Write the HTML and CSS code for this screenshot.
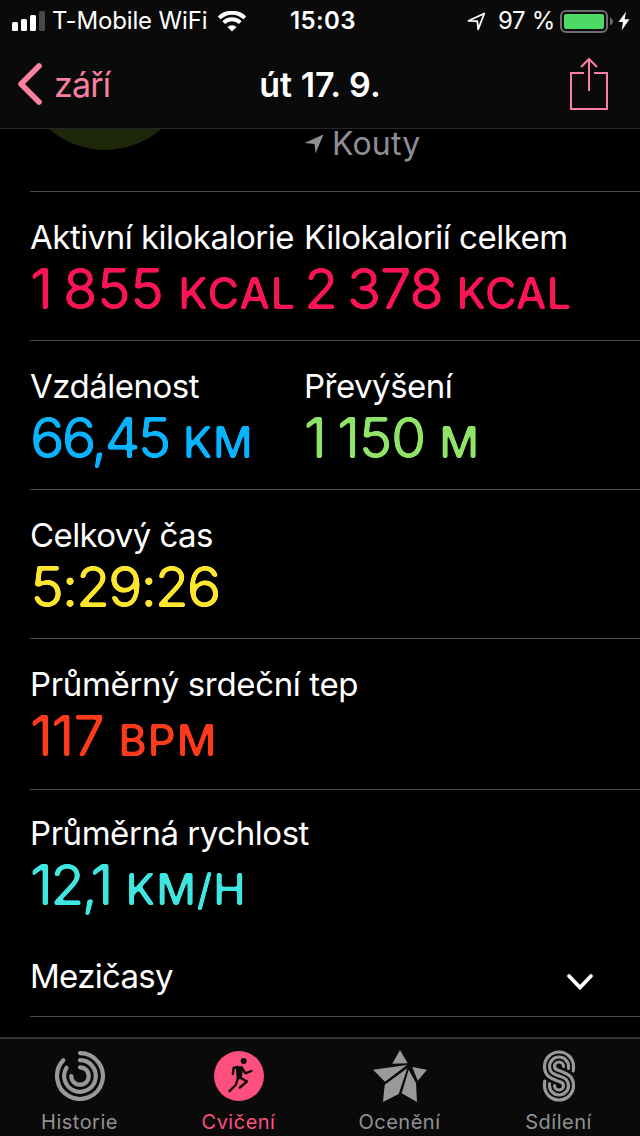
FILE: index.html
```
<!DOCTYPE html>
<html lang="cs">
<head>
    <meta charset="utf-8">
    <title>út 17. 9.</title>
    <link rel="stylesheet" href="styles.css">
</head>
<body>
    <svg class="defs" width="0" height="0">
        <filter id="rounded" x="-5%" y="-5%" width="110%" height="110%" color-interpolation-filters="sRGB">
            <feGaussianBlur stdDeviation="1.3"/>
            <feComponentTransfer>
                <feFuncA type="linear" slope="4" intercept="-1.4"/>
            </feComponentTransfer>
        </filter>
    </svg>

    <header class="top">
        <div class="status">
            <div class="status-left">
                <svg width="34" height="22" viewBox="0 0 34 22" fill="#fff">
                    <rect x="0" y="12" width="6" height="9" rx="1.5"/>
                    <rect x="9" y="9" width="6" height="12" rx="1.5"/>
                    <rect x="18" y="5" width="6" height="16" rx="1.5"/>
                    <rect x="27" y="1" width="6" height="20" rx="1.5" fill="#48484a"/>
                </svg>
                <span class="carrier">T-Mobile WiFi</span>
                <svg width="28" height="21" viewBox="0 0 28 21" fill="none" stroke="#fff" stroke-width="4">
                    <path d="M1.2 6.9 A18.2 18.2 0 0 1 26.8 6.9"/>
                    <path d="M5.7 11.7 A11.8 11.8 0 0 1 22.3 11.7"/>
                    <path d="M9.4 16 A6.6 6.6 0 0 1 18.6 16 L14 20.6 Z" fill="#fff" stroke="none"/>
                </svg>
            </div>
            <span class="time">15:03</span>
            <div class="status-right">
                <svg width="19" height="19" viewBox="0 0 19 19" fill="none" stroke="#fff" stroke-width="1.8" stroke-linejoin="round">
                    <path d="M1.5 8.8 L17.3 1.5 L11.2 17.3 L10.3 9.1 Z"/>
                </svg>
                <span class="percent">97 %</span>
                <svg width="53" height="23" viewBox="0 0 53 23">
                    <rect x="1" y="1" width="46" height="21" rx="5" fill="none" stroke="#6d6d70" stroke-width="2"/>
                    <rect x="4" y="4" width="40" height="15" rx="2" fill="#4cd964"/>
                    <path d="M50 7.5 Q53 9 53 11.5 Q53 14 50 15.5 Z" fill="#6d6d70"/>
                </svg>
                <svg width="12" height="20" viewBox="0 0 12 20" fill="#fff">
                    <path d="M8 0.5 L0.5 11 H5 L3.6 19.5 L11.5 8.3 H6.6 Z"/>
                </svg>
            </div>
        </div>
        <nav class="nav">
            <a class="back">
                <svg width="26" height="44" viewBox="0 0 26 44" fill="none" stroke="#fb7fa1" stroke-width="5.6" stroke-linecap="round" stroke-linejoin="round">
                    <path d="M22 4 L4 22 L22 40"/>
                </svg>
                <span>září</span>
            </a>
            <h1>út 17. 9.</h1>
            <svg class="share" width="40" height="54" viewBox="0 0 40 54" fill="none" stroke="#fb7fa1" stroke-width="2">
                <path d="M15 16 H2 V52 H38 V16 H25"/>
                <path d="M20 34 V2"/>
                <path d="M12 10 L20 2 L28 10"/>
            </svg>
        </nav>
    </header>

    <main>
        <section class="summary">
            <div class="badge-clip">
                <div class="badge"></div>
            </div>
            <div class="place">
                <svg width="20" height="20" viewBox="0 0 20 20" fill="#8e8e93">
                    <path d="M0.5 9 L19.5 0.5 L11.5 19.5 L10.5 10 Z"/>
                </svg>
                <span>Kouty</span>
            </div>
        </section>

        <section class="row">
            <div class="cell">
                <div class="label">Aktivní kilokalorie</div>
                <div class="value pink active-kcal">1<i></i>855 <small>KCAL</small></div>
            </div>
            <div class="cell">
                <div class="label">Kilokalorií celkem</div>
                <div class="value pink">2<i></i>378 <small>KCAL</small></div>
            </div>
        </section>
        <section class="row">
            <div class="cell">
                <div class="label">Vzdálenost</div>
                <div class="value blue">66,45 <small>KM</small></div>
            </div>
            <div class="cell">
                <div class="label">Převýšení</div>
                <div class="value green">1<i></i>150 <small>M</small></div>
            </div>
        </section>
        <section class="row">
            <div class="cell">
                <div class="label time-label">Celkový čas</div>
                <div class="value yellow">5:29:26</div>
            </div>
        </section>
        <section class="row heart">
            <div class="cell">
                <div class="label">Průměrný srdeční tep</div>
                <div class="value red">117 <small>BPM</small></div>
            </div>
        </section>
        <section class="row speed">
            <div class="cell">
                <div class="label">Průměrná rychlost</div>
                <div class="value cyan">12,1 <small>KM/H</small></div>
            </div>
        </section>
        <section class="splits">
            <span class="label">Mezičasy</span>
            <svg width="30" height="20" viewBox="0 0 30 20" fill="none" stroke="#fff" stroke-width="3.8" stroke-linecap="round">
                <path d="M4 4 L15 15.5 L26 4"/>
            </svg>
        </section>
    </main>

    <footer class="tabs">
        <a class="tab">
            <svg width="50" height="50" viewBox="0 0 50 50" fill="none" stroke="#999" stroke-width="4.2" stroke-linecap="round">
                <path d="M25 2.1 A22.9 22.9 0 1 1 8.3 9.3"/>
                <path d="M25 9.2 A15.8 15.8 0 1 1 11.5 16.8"/>
                <path d="M25 16.3 A8.7 8.7 0 1 1 16.3 25"/>
            </svg>
            <span>Historie</span>
        </a>
        <a class="tab active">
            <svg width="50" height="50" viewBox="0 0 50 50" fill="none" stroke="#0a0a0a" stroke-width="2.4" stroke-linecap="round" stroke-linejoin="round">
                <circle cx="25" cy="25" r="25" fill="#ff4f7f" stroke="none"/>
                <circle cx="29.7" cy="10" r="3" fill="#0a0a0a" stroke="none"/>
                <path d="M23 16.5 L28 16.5 L26.5 27 L23.8 27 Z" fill="#0a0a0a"/>
                <path d="M23.5 16 L19.6 17 L18.8 23"/>
                <path d="M28 17 L31.5 22.3 L37.3 20"/>
                <path d="M26 26.5 L33 30.5 L25.8 36.5"/>
                <path d="M24 27 L21.7 34 L15.5 40.2"/>
            </svg>
            <span>Cvičení</span>
        </a>
        <a class="tab">
            <svg width="54" height="54" viewBox="0 0 54 54" fill="#999">
                <path d="M27 1 L34.7 14.3 L19.3 14.7 Z"/>
                <path d="M0 20.7 L34 16 L12 32.7 Z"/>
                <path d="M34.3 19.3 L11.7 35.7 L10 53 L25.7 45 Z"/>
                <path d="M35.7 20.7 L28.7 44.3 L44 53 L43 34 Z"/>
                <path d="M39.3 18 L54 20.7 L44.7 31.7 Z"/>
            </svg>
            <span>Ocenění</span>
        </a>
        <a class="tab">
            <svg width="34" height="54" viewBox="0 0 34 54" fill="none" stroke="#999" stroke-width="3.2" stroke-linecap="round">
                <path d="M31.2 22 Q31.5 20 31.5 17.5 A14.5 14.5 0 0 0 2.5 17.5 C2.5 27 9 29.5 14.5 31.5 C19 33 21.5 33.5 21.5 36.5 A4.5 4.5 0 0 1 12.5 36.5"/>
                <path d="M26.5 19.5 V17.5 A9.5 9.5 0 0 0 7.5 17.5 C7.5 25 14 25.8 17 27 C20 28.2 26.5 29 26.5 36.5 A9.5 9.5 0 0 1 7.5 36.5 V34.5"/>
                <path d="M21.5 17.5 A4.5 4.5 0 0 0 12.5 17.5 C12.5 20.5 15 21 19.5 22.5 C25 24.5 31.5 27 31.5 36.5 A14.5 14.5 0 0 1 2.5 36.5 Q2.5 34 2.8 32"/>
            </svg>
            <span>Sdílení</span>
        </a>
    </footer>
</body>
</html>
```
FILE: styles.css
```
* {
    box-sizing: border-box;
}
body {
    margin: 0;
    width: 640px;
    height: 1136px;
    overflow: hidden;
    display: flex;
    flex-direction: column;
    background: #000;
    color: #fff;
    font-family: Inter, "Liberation Sans", sans-serif;
}
svg {
    display: block;
    flex: none;
}
.defs {
    position: absolute;
}
.top {
    height: 129px;
    background: #0a0a0a;
    border-bottom: 1px solid #262626;
}
.status {
    height: 40px;
    padding: 1px 10px 0 12px;
    display: grid;
    grid-template-columns: 278px 1fr auto;
    align-items: center;
    font-size: 24px;
    line-height: 40px;
    white-space: nowrap;
}
.status-left,
.status-right {
    display: flex;
    align-items: center;
}
.carrier {
    width: 154px;
    margin: 0 12px 0 6px;
    letter-spacing: -0.15px;
}
.time {
    font-weight: 600;
    letter-spacing: 0.4px;
}
.percent {
    width: 55px;
    margin: 0 7px 0 12px;
    letter-spacing: -0.3px;
}
.status-right svg:last-child {
    margin-left: 5px;
}
.nav {
    height: 88px;
    padding: 0 31px 0 17px;
    display: grid;
    grid-template-columns: 1fr auto 1fr;
    align-items: center;
    font-size: 34px;
}
.back {
    display: flex;
    align-items: center;
    gap: 11px;
    color: #fb7fa1;
    letter-spacing: -0.8px;
}
h1 {
    margin: 0 0 0 14px;
    font-size: 34px;
    font-weight: 600;
    letter-spacing: 0;
}
.share {
    justify-self: end;
}
main {
    flex: 1;
    padding-left: 30px;
}
.summary {
    height: 63px;
    display: flex;
    border-bottom: 1px solid #4a4a4a;
}
.badge-clip {
    width: 274px;
    height: 62px;
    margin-left: -10px;
    padding-bottom: 41px;
    flex: none;
    display: flex;
    align-items: flex-end;
    overflow: hidden;
}
.badge {
    width: 170px;
    height: 170px;
    flex: none;
    border-radius: 50%;
    background: #1f270b;
}
.place {
    height: 30px;
    margin-left: 10px;
    display: flex;
    align-items: center;
    gap: 8px;
    color: #8e8e93;
    font-size: 32px;
    line-height: 30px;
    letter-spacing: 0.2px;
}
.row {
    height: 149px;
    padding-top: 25px;
    display: flex;
    border-bottom: 1px solid #4a4a4a;
}
.cell {
    width: 274px;
    flex: none;
    white-space: nowrap;
}
.label {
    font-size: 33px;
    line-height: 40px;
    letter-spacing: -0.5px;
}
.time-label {
    letter-spacing: -0.6px;
}
.value {
    margin-top: 2px;
    font-size: 56px;
    line-height: 60px;
    letter-spacing: -1.5px;
    filter: url(#rounded);
}
.value small {
    font-size: 43.5px;
    font-weight: 500;
    letter-spacing: 0;
}
.value i {
    display: inline-block;
    width: 10px;
}
.pink {
    color: #fa1455;
}
.active-kcal {
    letter-spacing: -0.8px;
}
.active-kcal i {
    width: 11px;
}
.active-kcal small {
    letter-spacing: 0.8px;
}
.blue {
    color: #08b4ff;
    letter-spacing: -3.1px;
}
.blue small {
    margin-left: 2px;
}
.green {
    color: #8fe368;
}
.green i {
    width: 12px;
}
.yellow {
    color: #ffe62e;
    letter-spacing: -2.1px;
}
.red {
    color: #ff3a1c;
    letter-spacing: -1.2px;
}
.red small {
    letter-spacing: 1px;
}
.cyan {
    color: #3fe6e1;
    letter-spacing: -2.6px;
}
.cyan small {
    margin-left: 2px;
    letter-spacing: 0.6px;
}
.heart {
    height: 151px;
}
.heart .label {
    letter-spacing: -0.35px;
}
.speed {
    height: 150px;
    padding-top: 23px;
    border: 0;
}
.speed .label {
    letter-spacing: -0.45px;
}
.splits {
    height: 77px;
    padding: 0 45px 4px 0;
    display: flex;
    align-items: center;
    justify-content: space-between;
    border-bottom: 1px solid #4a4a4a;
}
.splits .label {
    letter-spacing: -0.7px;
}
.splits svg {
    margin-top: 11px;
}
.tabs {
    height: 99px;
    display: flex;
    background: #0a0a0a;
    border-top: 2px solid #333;
}
.tab {
    width: 160px;
    display: grid;
    grid-template-rows: 74px 18px;
    justify-items: center;
    align-items: center;
    align-content: start;
    color: #929292;
    font-size: 20px;
    line-height: 18px;
    letter-spacing: 0.5px;
}
.tab span {
    padding-right: 1px;
}
.active {
    padding-right: 2px;
    color: #ff4f7f;
}
.tab:last-child {
    padding-right: 2px;
}
```
